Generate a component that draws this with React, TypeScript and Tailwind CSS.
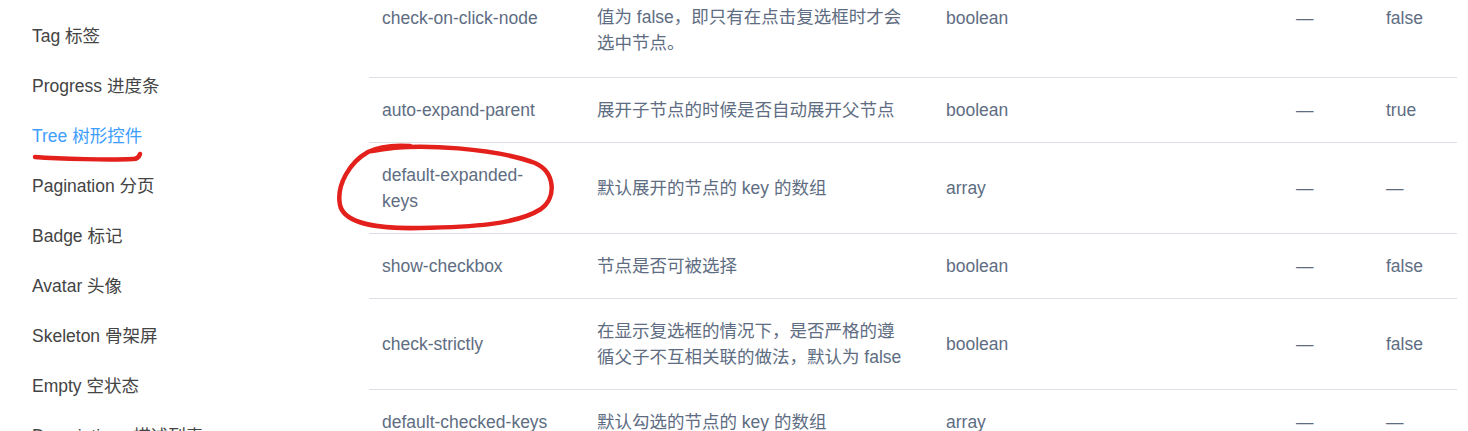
const NAV_ITEMS = [
  { label: "Tag 标签" },
  { label: "Progress 进度条" },
  { label: "Tree 树形控件", active: true },
  { label: "Pagination 分页" },
  { label: "Badge 标记" },
  { label: "Avatar 头像" },
  { label: "Skeleton 骨架屏" },
  { label: "Empty 空状态" },
  { label: "Descriptions 描述列表" },
];

type Row = {
  name: string[];
  desc: string[];
  type: string;
  options: string;
  value: string;
};

const ROWS: Row[] = [
  {
    name: ["check-on-click-node"],
    desc: [
      "是否在点击节点的时候选中节点，默认",
      "值为 false，即只有在点击复选框时才会",
      "选中节点。",
    ],
    type: "boolean",
    options: "—",
    value: "false",
  },
  {
    name: ["auto-expand-parent"],
    desc: ["展开子节点的时候是否自动展开父节点"],
    type: "boolean",
    options: "—",
    value: "true",
  },
  {
    name: ["default-expanded-", "keys"],
    desc: ["默认展开的节点的 key 的数组"],
    type: "array",
    options: "—",
    value: "—",
  },
  {
    name: ["show-checkbox"],
    desc: ["节点是否可被选择"],
    type: "boolean",
    options: "—",
    value: "false",
  },
  {
    name: ["check-strictly"],
    desc: ["在显示复选框的情况下，是否严格的遵", "循父子不互相关联的做法，默认为 false"],
    type: "boolean",
    options: "—",
    value: "false",
  },
  {
    name: ["default-checked-keys"],
    desc: ["默认勾选的节点的 key 的数组"],
    type: "array",
    options: "—",
    value: "—",
  },
];

function Lines({ lines }: { lines: string[] }) {
  return (
    <>
      {lines.map((line, i) => (
        <div key={i} className="whitespace-nowrap">
          {line}
        </div>
      ))}
    </>
  );
}

export default function App() {
  return (
    <div className="relative w-[1468px] h-[431px] overflow-hidden bg-white font-['Liberation_Sans','Noto_Sans_CJK_SC',sans-serif] text-[17.5px]">
      <div className="flex">
        <nav className="w-[369px] shrink-0 pt-[11px] pl-[32px]">
          {NAV_ITEMS.map((item) => (
            <div
              key={item.label}
              className={
                item.active
                  ? "h-[50px] leading-[50px] text-[#409eff]"
                  : "h-[50px] leading-[50px] text-[#444]"
              }
            >
              {item.label}
            </div>
          ))}
        </nav>

        {/* page is scrolled: first row is partly above the top edge */}
        <div className="w-[1088px] -mt-[41px] text-[#5e6d82] leading-[26px]">
          {ROWS.map((row, index) => (
            <div
              key={row.name.join("")}
              className="grid grid-cols-[215px_349px_350px_90px_84px] items-center border-b border-[#dcdfe6]"
            >
              <div className="px-[13px] py-[19px]">
                <Lines lines={row.name} />
              </div>
              <div
                className={
                  index === 0
                    ? "px-[13px] pt-[19px] pb-[21px]"
                    : "px-[13px] py-[19px]"
                }
              >
                <Lines lines={row.desc} />
              </div>
              <div className="px-[13px] py-[19px]">{row.type}</div>
              <div className="px-[13px] py-[19px]">{row.options}</div>
              <div className="px-[13px] py-[19px]">{row.value}</div>
            </div>
          ))}
        </div>
      </div>

      {/* hand-drawn red marks on top of the page */}
      <svg
        className="absolute inset-0 pointer-events-none"
        width="1468"
        height="431"
        viewBox="0 0 1468 431"
        fill="none"
      >
        <path
          d="M35 157 C60 159 110 160 133 159 C137 159 139 157 140 154"
          stroke="#e3201b"
          strokeWidth="4.5"
          strokeLinecap="round"
        />
        <path
          d="M372 151 C420 141 500 150 535 163 C555 172 557 197 541 209 C516 225 470 227 420 228 C380 229 344 224 340 205 C336 185 350 162 368 152 C380 146 396 145 410 146"
          stroke="#e3201b"
          strokeWidth="4.5"
          strokeLinecap="round"
          strokeLinejoin="round"
        />
      </svg>
    </div>
  );
}
